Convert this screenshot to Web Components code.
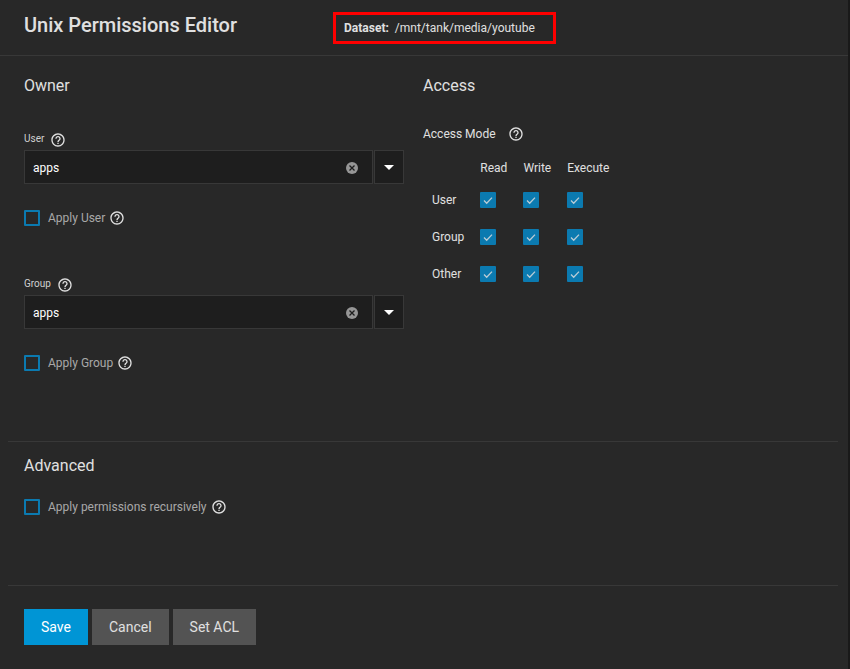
<!DOCTYPE html>
<html lang="en">
<head>
<meta charset="utf-8">
<title>Unix Permissions Editor</title>
<style>
  body { margin: 0; background: #282828; color: #e0e0e0; font: 12px/16px Roboto, sans-serif; }
</style>
</head>
<body>
<permissions-editor></permissions-editor>
<script>
const define = (name, html, setup) => {
  const template = document.createElement('template');
  template.innerHTML = html;
  customElements.define(name, class extends HTMLElement {
    connectedCallback() {
      if (this.shadowRoot) return;
      const root = this.attachShadow({ mode: 'open' });
      root.append(template.content.cloneNode(true));
      if (setup) setup(root, this);
    }
  });
};

define('help-tip', `
  <style>
    :host { display: inline-flex; }
    button { display: flex; padding: 0; border: 0; background: none; color: #e0e0e0; cursor: pointer; }
    svg { width: 16px; height: 16px; fill: currentColor; }
  </style>
  <button type="button" aria-label="Help"><svg viewBox="0 0 24 24"><path d="M11 18h2v-2h-2v2zm1-16C6.480 2 2 6.480 2 12s4.480 10 10 10 10-4.480 10-10S17.520 2 12 2zm0 18c-4.410 0-8-3.590-8-8s3.590-8 8-8 8 3.590 8 8-3.590 8-8 8zm0-14c-2.210 0-4 1.790-4 4h2c0-1.100.9-2 2-2s2 .9 2 2c0 2-3 1.750-3 5h2c0-2.250 3-2.500 3-5 0-2.210-1.790-4-4-4z"/></svg></button>`);

define('check-box', `
  <style>
    :host { display: flex; align-items: center; gap: 4px; color: #a8a8a8; }
    label { display: flex; align-items: center; gap: 8px; }
    .box { display: grid; width: 16px; height: 16px; }
    input, svg { grid-area: 1 / 1; width: 16px; height: 16px; margin: 0; box-sizing: border-box; }
    input { appearance: none; border: 2px solid #0b7ab0; border-radius: 1px; }
    input:checked { background: #0b7ab0; }
    svg { fill: none; stroke: #b9ccd6; stroke-width: 1.300; pointer-events: none; visibility: hidden; }
    input:checked + svg { visibility: visible; }
  </style>
  <label><span class="box"><input type="checkbox"><svg viewBox="0 0 16 16"><path d="M4 8.500l2.700 2.700L12 5.600"/></svg></span><slot></slot></label>
  <slot name="help"></slot>`, (root, host) => {
    const input = root.querySelector('input');
    input.checked = host.hasAttribute('checked');
    if (host.hasAttribute('name')) input.setAttribute('aria-label', host.getAttribute('name'));
  });

define('combo-box', `
  <style>
    :host { display: block; }
    .caption { display: flex; gap: 6px; font-size: 10px; line-height: 14px; height: 18px; color: #d0d0d0; }
    .row { display: flex; gap: 1px; height: 34px; }
    .field { flex: 1; display: flex; align-items: center; border: 1px solid #383838; background: #1e1e1e; padding: 1px 14px 0 8px; }
    input { flex: 1; min-width: 0; padding: 0; border: 0; outline: 0; background: none; color: #fff; font: 12px/20px Roboto, sans-serif; }
    button { display: grid; place-items: center; padding: 0; border: 0; background: none; }
    .toggle { width: 30px; border: 1px solid #383838; background: #1e1e1e; }
    .toggle svg { width: 10px; height: 5px; fill: #fff; }
    .clear svg { width: 12px; height: 12px; }
  </style>
  <div class="caption"><label for="value"></label><help-tip></help-tip></div>
  <div class="row">
    <div class="field"><input id="value" type="text" value="apps">
      <button class="clear" type="button" aria-label="Clear"><svg viewBox="0 0 12 12"><circle cx="6" cy="6" r="6" fill="#969696"/><path d="M3.500 3.500l5 5m0-5l-5 5" stroke="#1e1e1e" stroke-width="1.300"/></svg></button>
    </div>
    <button class="toggle" type="button" aria-label="Show options"><svg viewBox="0 0 10 5"><path d="M0 0h10L5 5z"/></svg></button>
  </div>`, (root, host) => { root.querySelector('label').textContent = host.getAttribute('label'); });

define('access-table', `
  <style>
    :host { display: block; }
    table { border-collapse: collapse; }
    th { font-weight: 400; text-align: left; padding: 0 16px 0 0; height: 37px; }
    td { padding: 0; height: 37px; }
    thead th, thead td { height: 27px; }
    tr > :first-child { padding: 0 16px 0 9px; }
  </style>
  <table>
    <thead><tr><td></td><th scope="col">Read</th><th scope="col">Write</th><th scope="col">Execute</th></tr></thead>
    <tbody></tbody>
  </table>`, root => {
    root.querySelector('tbody').innerHTML = ['User', 'Group', 'Other'].map(who =>
      `<tr><th scope="row">${who}</th>${['Read', 'Write', 'Execute'].map(mode =>
        `<td><check-box checked name="${who} ${mode}"></check-box></td>`).join('')}</tr>`).join('');
  });

define('action-button', `
  <style>
    :host { display: block; }
    button { height: 36px; padding: 0 17px; border: 0; background: #535353; color: #e0e0e0; font: 14px/20px Roboto, sans-serif; }
    :host([primary]) button { background: #0095d5; color: #fff; }
  </style>
  <button type="button"><slot></slot></button>`);

define('permissions-editor', `
  <style>
    :host { display: block; box-sizing: border-box; min-height: 100vh; border-right: 2px solid #191919; }
    header { display: flex; align-items: center; gap: 96px; height: 55px; padding: 0 24px; border-bottom: 1px solid #383838; }
    h1 { margin: 0 0 6px; font-size: 20px; line-height: 24px; font-weight: 500; }
    .dataset { display: flex; gap: 6px; padding: 5px 18px 5px 8px; border: 3px solid #f00; }
    .dataset b { font-weight: 700; }
    .dataset span { font-kerning: none; }
    h2 { margin: 0; font-size: 16px; line-height: 20px; font-weight: 400; }
    .columns { display: grid; grid-template-columns: 1fr 1fr; margin: 0 10px 0 8px; padding-top: 20px; height: 365px; }
    .owner { padding: 0 19px 0 16px; }
    combo-box { margin: 36px 0 26px; }
    .owner check-box + combo-box { margin-top: 51px; }
    .mode { display: flex; align-items: center; gap: 12px; margin: 30px 0 12px; }
    .advanced, footer { margin: 0 10px 0 8px; border-top: 1px solid #383838; padding: 0 16px; }
    .advanced { padding-top: 14px; padding-bottom: 70px; }
    .advanced check-box { margin-top: 23px; }
    footer { display: flex; gap: 4px; padding-top: 23px; padding-bottom: 24px; }
  </style>
  <header>
    <h1>Unix Permissions Editor</h1>
    <div class="dataset"><b>Dataset:</b><span>/mnt/tank/media/youtube</span></div>
  </header>
  <form>
    <div class="columns">
      <section class="owner">
        <h2>Owner</h2>
        <combo-box label="User"></combo-box>
        <check-box>Apply User<help-tip slot="help"></help-tip></check-box>
        <combo-box label="Group"></combo-box>
        <check-box>Apply Group<help-tip slot="help"></help-tip></check-box>
      </section>
      <section class="access">
        <h2>Access</h2>
        <div class="mode"><span>Access Mode</span><help-tip></help-tip></div>
        <access-table></access-table>
      </section>
    </div>
    <section class="advanced">
      <h2>Advanced</h2>
      <check-box>Apply permissions recursively<help-tip slot="help"></help-tip></check-box>
    </section>
    <footer>
      <action-button primary>Save</action-button>
      <action-button>Cancel</action-button>
      <action-button>Set ACL</action-button>
    </footer>
  </form>`);
</script>
</body>
</html>
